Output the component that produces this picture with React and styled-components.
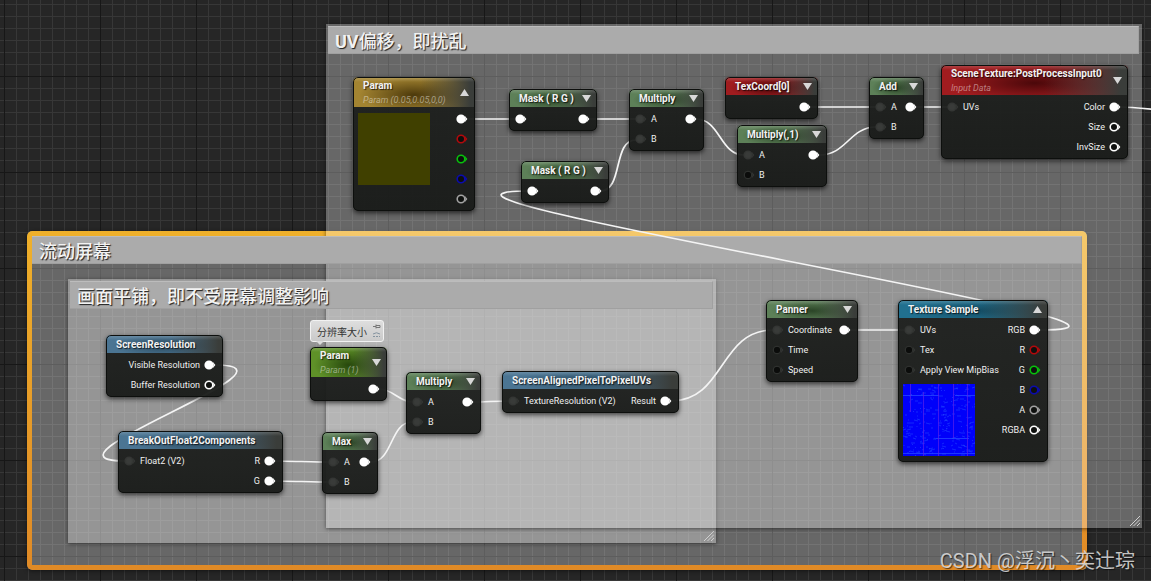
import React from "react";
import styled, { createGlobalStyle, css } from "styled-components";

const GlobalStyle = createGlobalStyle`
  * {
    box-sizing: border-box;
  }
  body {
    margin: 0;
    background: #262626;
    font-family: Roboto, "Noto Sans CJK SC", sans-serif;
  }
`;

const headerColors = {
  green: ["#5d8058", "#2b4527"],
  lime: ["#5f9128", "#27480d"],
  red: ["#a01c1f", "#4b080a"],
  blue: ["#4b7593", "#29485c"],
  cyan: ["#21708f", "#134a60"],
  gold: ["#a38431", "#4c390b"],
};

const pinColors = {
  white: "#ffffff",
  red: "#b3090c",
  green: "#08c20c",
  blue: "#0b0bb0",
  gray: "#a2a2a2",
};

const comments = [
  { id: "flow", title: "流动屏幕", x: 27, y: 231, w: 1060, h: 339, selected: true },
  { id: "tile", title: "画面平铺，即不受屏幕调整影响", x: 68, y: 279, w: 648, h: 264 },
  { id: "uv", latin: "UV", title: "偏移，即扰乱", x: 326, y: 24, w: 816, h: 504 },
];

const nodes = [
  {
    id: "param", title: "Param", sub: "Param (0.05,0.05,0,0)", color: "gold",
    x: 353, y: 77, w: 122, toggle: "up", preview: "olive",
    outputs: [
      { on: true },
      { color: "red" },
      { color: "green" },
      { color: "blue" },
      { color: "gray" },
    ],
  },
  {
    id: "mask1", title: "Mask ( R G )", color: "green", x: 509, y: 89, w: 88, toggle: "down",
    inputs: [{ on: true, bright: true }], outputs: [{ on: true }],
  },
  {
    id: "mask2", title: "Mask ( R G )", color: "green", x: 521, y: 161, w: 88, toggle: "down",
    inputs: [{ on: true, bright: true }], outputs: [{ on: true }],
  },
  {
    id: "mul1", title: "Multiply", color: "green", x: 629, y: 89, w: 75, toggle: "down",
    inputs: [{ label: "A", on: true }, { label: "B", on: true }], outputs: [{ on: true }],
  },
  {
    id: "texcoord", title: "TexCoord[0]", color: "red", x: 725, y: 77, w: 93, toggle: "down",
    outputs: [{ on: true }],
  },
  {
    id: "mul2", title: "Multiply(,1)", color: "green", x: 737, y: 125, w: 90, toggle: "down",
    inputs: [{ label: "A", on: true }, { label: "B" }], outputs: [{ on: true }],
  },
  {
    id: "add", title: "Add", color: "green", x: 869, y: 77, w: 55, toggle: "down",
    inputs: [{ label: "A", on: true }, { label: "B", on: true }], outputs: [{ on: true }],
  },
  {
    id: "scene", title: "SceneTexture:PostProcessInput0", sub: "Input Data", color: "red",
    x: 941, y: 65, w: 187, toggle: "down",
    inputs: [{ label: "UVs", on: true }],
    outputs: [{ label: "Color", on: true }, { label: "Size" }, { label: "InvSize" }],
  },
  {
    id: "screenres", title: "ScreenResolution", color: "blue", x: 106, y: 335, w: 117,
    outputs: [{ label: "Visible Resolution", on: true }, { label: "Buffer Resolution" }],
  },
  {
    id: "breakout", title: "BreakOutFloat2Components", color: "blue", x: 118, y: 431, w: 165,
    inputs: [{ label: "Float2 (V2)", on: true }],
    outputs: [{ label: "R", on: true }, { label: "G", on: true }],
  },
  {
    id: "param1", title: "Param", sub: "Param (1)", color: "lime", x: 310, y: 347, w: 77,
    toggle: "down", outputs: [{ on: true }],
  },
  {
    id: "max", title: "Max", color: "green", x: 322, y: 432, w: 56, toggle: "down",
    inputs: [{ label: "A", on: true }, { label: "B", on: true }], outputs: [{ on: true }],
  },
  {
    id: "mul3", title: "Multiply", color: "green", x: 406, y: 372, w: 75, toggle: "down",
    inputs: [{ label: "A", on: true }, { label: "B", on: true }], outputs: [{ on: true }],
  },
  {
    id: "aligned", title: "ScreenAlignedPixelToPixelUVs", color: "blue", x: 502, y: 371, w: 177,
    inputs: [{ label: "TextureResolution (V2)", on: true }],
    outputs: [{ label: "Result", on: true }],
  },
  {
    id: "panner", title: "Panner", color: "green", x: 766, y: 300, w: 92, toggle: "down",
    inputs: [{ label: "Coordinate", on: true }, { label: "Time" }, { label: "Speed" }],
    outputs: [{ on: true }],
  },
  {
    id: "sample", title: "Texture Sample", color: "cyan", x: 898, y: 300, w: 150, toggle: "up",
    preview: "noise",
    inputs: [{ label: "UVs", on: true }, { label: "Tex" }, { label: "Apply View MipBias" }],
    outputs: [
      { label: "RGB", on: true },
      { label: "R", color: "red" },
      { label: "G", color: "green" },
      { label: "B", color: "blue" },
      { label: "A", color: "gray" },
      { label: "RGBA" },
    ],
  },
];

// x1, y1, x2, y2, length of the tangents
const wires = [
  [467, 119, 516, 119, 10],
  [588, 119, 636, 119, 10],
  [600, 191, 636, 140, 24],
  [696, 119, 744, 155, 24],
  [810, 107, 876, 107, 10],
  [820, 155, 876, 127, 26],
  [915, 107, 948, 107, 10],
  [1120, 107, 1190, 112, 20],
  [1040, 330, 530, 191, 200],
  [215, 365, 125, 461, 102],
  [275, 461, 328, 462, 10],
  [275, 481, 328, 482, 10],
  [380, 389, 412, 402, 12],
  [371, 462, 412, 422, 22],
  [473, 402, 508, 401, 10],
  [671, 401, 773, 330, 54],
  [850, 330, 904, 330, 10],
];

const Canvas = styled.main`
  position: relative;
  isolation: isolate;
  min-height: 100vh;
  overflow: hidden;
  background-color: #262626;
  background-image:
    linear-gradient(90deg, #171717 1px, transparent 1px),
    linear-gradient(#171717 1px, transparent 1px),
    linear-gradient(90deg, #373737 1px, transparent 1px),
    linear-gradient(#373737 1px, transparent 1px);
  background-size: 96px 96px, 96px 96px, 12px 12px, 12px 12px;
  background-position: 4px 76px, 4px 76px, 4px 4px, 4px 4px;
`;

const CommentBox = styled.section`
  position: absolute;
  left: ${(p) => p.$x}px;
  top: ${(p) => p.$y}px;
  width: ${(p) => p.$w}px;
  height: ${(p) => p.$h}px;
  padding: 2px 3px 2px 2px;
  background: rgba(255, 255, 255, 0.3);
  box-shadow: 0 1px 4px rgba(0, 0, 0, 0.5);

  ${(p) =>
    p.$selected &&
    css`
      padding: 5px;
      border-radius: 5px;

      &::before {
        content: "";
        position: absolute;
        inset: 0;
        padding: 5px;
        border-radius: 5px;
        background: linear-gradient(#efb02a, #e08a26);
        mask: linear-gradient(#000 0 0) content-box exclude, linear-gradient(#000 0 0);
      }
    `}
`;

/* title bars stay opaque even where another comment overlaps them */
const CommentTitle = styled.h2`
  position: relative;
  z-index: 1;
  margin: 0;
  height: 28px;
  padding-left: 7px;
  background: #ababab;
  border: 1px solid #a0a0a0;
  border-top-color: #bcbcbc;
  border-left: 0;
  color: #f2f2f2;
  font-size: 18px;
  font-weight: 500;
  line-height: 30px;
  white-space: nowrap;
  text-shadow: 1px 1px 1px #1c1c1c;
`;

const Grip = styled.svg`
  position: absolute;
  right: 2px;
  bottom: 2px;
`;

const Wires = styled.svg`
  position: absolute;
  z-index: 2;
  inset: 0;
  width: 100%;
  height: 100%;
  fill: none;
  stroke: #f4f4f4;
  stroke-width: 1.7;
`;

const NodeBox = styled.article`
  position: absolute;
  z-index: 2;
  left: ${(p) => p.$x}px;
  top: ${(p) => p.$y}px;
  width: ${(p) => p.$w}px;
  border-radius: 5px;
  overflow: hidden;
  background: linear-gradient(rgba(30, 32, 30, 0.95), rgba(24, 26, 24, 0.95));
  box-shadow: 0 2px 5px rgba(0, 0, 0, 0.65);

  &::after {
    content: "";
    position: absolute;
    inset: 0;
    border: 1px solid #0d0f0d;
    border-radius: 5px;
    pointer-events: none;
  }
`;

const NodeHeader = styled.header`
  display: flex;
  align-items: center;
  justify-content: space-between;
  height: ${(p) => (p.$tall ? 30 : 18)}px;
  padding: 2px 6px 0 10px;
  background:
    linear-gradient(rgba(255, 255, 255, 0.2), transparent 5px),
    linear-gradient(90deg, transparent 55%, #3a3d3a 96%),
    radial-gradient(ellipse 45% 60% at 50% 60%, ${(p) => headerColors[p.$color][1]}, transparent),
    ${(p) => headerColors[p.$color][0]};
`;

const Titles = styled.div`
  min-width: 0;
  white-space: nowrap;
`;

const NodeTitle = styled.h3`
  margin: 0;
  color: #f2f2f2;
  font-size: 10px;
  font-weight: 700;
  line-height: 14px;
  text-shadow: 1px 1px 1px rgba(0, 0, 0, 0.7);
`;

const NodeSub = styled.p`
  margin: 0;
  color: rgba(255, 255, 255, 0.45);
  font-size: 9px;
  font-style: italic;
  line-height: 14px;
`;

const Toggle = styled.button`
  display: flex;
  flex: none;
  margin-bottom: 2px;
  padding: 0;
  border: 0;
  background: none;
  color: #d8d8d8;
  cursor: pointer;
`;

const NodeBody = styled.div`
  display: flex;
  justify-content: space-between;
  padding: 2px 0;
`;

const Inputs = styled.div`
  display: flex;
  flex-direction: column;
  align-items: flex-start;
`;

const Outputs = styled(Inputs)`
  align-items: flex-end;
  margin-left: auto;
`;

const PinRow = styled.div`
  display: flex;
  align-items: center;
  gap: 4px;
  height: 20px;
  padding: ${(p) => (p.$out ? "0 7px 0 0" : "0 0 0 6px")};
  color: #f0f0f0;
  font-size: 9px;
  line-height: 20px;
  white-space: nowrap;
`;

const Swatch = styled.div`
  width: 72px;
  height: 72px;
  margin: 4px 0 4px 5px;
  background: #404000;
`;

const NoiseSwatch = styled.svg`
  margin: 4px 0 4px 5px;
  background: #0000fa;
`;

const Bubble = styled.aside`
  position: absolute;
  z-index: 2;
  left: 310px;
  top: 320px;
  display: flex;
  align-items: center;
  gap: 5px;
  height: 22px;
  padding: 0 2px 0 6px;
  border: 1px solid #f2f2f2;
  border-radius: 3px;
  background: linear-gradient(#dedede, #c9c9c9);
  color: #333;
  font-size: 10px;
  white-space: nowrap;

  &::after {
    content: "";
    position: absolute;
    left: 5px;
    top: 100%;
    border: 4px solid transparent;
    border-top-color: #dcdcdc;
    border-bottom: 0;
  }
`;

const Watermark = styled.footer`
  position: absolute;
  z-index: 2;
  right: 16px;
  bottom: 5px;
  color: rgba(225, 225, 225, 0.85);
  font-size: 20px;
  line-height: 30px;
  text-shadow: 1px 1px 1px rgba(0, 0, 0, 0.6);
`;

function Pin({ on, bright, out, color = "white" }) {
  const dim = !out && !bright;
  const stroke = dim ? "#343634" : pinColors[color];
  const fill = on ? (dim ? "#393b39" : stroke) : dim ? "#0b0c0b" : "#0e100e";
  return (
    <svg width="12" height="10" viewBox="0 0 12 10" aria-hidden="true">
      <path d="M8.8 1.8 L11.4 5 L8.8 8.2 Q10 5 8.8 1.8Z" fill={stroke} />
      <circle cx="5" cy="5" r="3.8" fill={fill} stroke={stroke} strokeWidth={dim && !on ? 1 : 1.6} />
    </svg>
  );
}

function Noise() {
  const streaks = [];
  let seed = 11;
  const rand = (n) => {
    seed = (seed * 16807) % 2147483647;
    return seed % n;
  };
  for (let i = 0; i < 230; i++) {
    const x = rand(72);
    const y = rand(72);
    streaks.push(`M${x} ${y}l${rand(5)} ${rand(3) - 1}`);
  }
  return (
    <NoiseSwatch width="72" height="72" viewBox="0 0 72 72" fill="none" aria-hidden="true">
      <path d={streaks.join("")} stroke="#2348ff" strokeWidth="0.7" opacity="0.8" />
      <path d="M0 11.5H36M52 11.5H72M33 54.5H66M0 69.5H72" stroke="#2a50ff" opacity="0.7" />
      <path d="M7.5 0V28M20.5 8V72M35.5 0V72M50.5 0V54M64.5 0V72" stroke="#5a20e8" opacity="0.7" />
    </NoiseSwatch>
  );
}

function Node({ node }) {
  const { title, sub, color, x, y, w, toggle, preview, inputs = [], outputs = [] } = node;
  return (
    <NodeBox $x={x} $y={y} $w={w}>
      <NodeHeader $color={color} $tall={Boolean(sub)}>
        <Titles>
          <NodeTitle>{title}</NodeTitle>
          {sub && <NodeSub>{sub}</NodeSub>}
        </Titles>
        {toggle && (
          <Toggle type="button" aria-label={`Toggle ${title}`}>
            <svg width="9" height="7" viewBox="0 0 9 7" fill="currentColor">
              <path d={toggle === "up" ? "M0 7L4.5 0L9 7Z" : "M0 0H9L4.5 7Z"} />
            </svg>
          </Toggle>
        )}
      </NodeHeader>
      <NodeBody>
        <Inputs>
          {inputs.map((pin, i) => (
            <PinRow key={i}>
              <Pin {...pin} />
              {pin.label}
            </PinRow>
          ))}
          {preview === "olive" && <Swatch />}
          {preview === "noise" && <Noise />}
        </Inputs>
        <Outputs>
          {outputs.map((pin, i) => (
            <PinRow key={i} $out>
              {pin.label}
              <Pin {...pin} out />
            </PinRow>
          ))}
        </Outputs>
      </NodeBody>
    </NodeBox>
  );
}

function App() {
  return (
    <>
      <GlobalStyle />
      <Canvas>
        {comments.map((c) => (
          <CommentBox key={c.id} $x={c.x} $y={c.y} $w={c.w} $h={c.h} $selected={c.selected}>
            <CommentTitle>
              {c.latin && <b>{c.latin}</b>}
              {c.title}
            </CommentTitle>
            {!c.selected && (
              <Grip width="10" height="10" viewBox="0 0 10 10" stroke="#d0d0d0" aria-hidden="true">
                <path d="M0 10L10 0M3.5 10L10 3.5M7 10L10 7" />
              </Grip>
            )}
          </CommentBox>
        ))}
        <Wires aria-hidden="true">
          {wires.map(([x1, y1, x2, y2, t]) => (
            <path key={`${x1}-${y1}`} d={`M${x1} ${y1}C${x1 + t} ${y1} ${x2 - t} ${y2} ${x2} ${y2}`} />
          ))}
        </Wires>
        {nodes.map((node) => (
          <Node key={node.id} node={node} />
        ))}
        <Bubble>
          分辨率大小
          <svg width="9" height="16" viewBox="0 0 9 16" fill="none" stroke="#777" aria-hidden="true">
            <path d="M1 3.5H4M4 1.5V5.5M4 2.5H8V4.5H4" />
            <path d="M1 11Q4.5 8.5 8 11M1 13.5H3M4 13.5H6M7 13.5H8" stroke="#8493a0" />
          </svg>
        </Bubble>
        <Watermark>CSDN @浮沉丶奕辻琮</Watermark>
      </Canvas>
    </>
  );
}

export default App;
